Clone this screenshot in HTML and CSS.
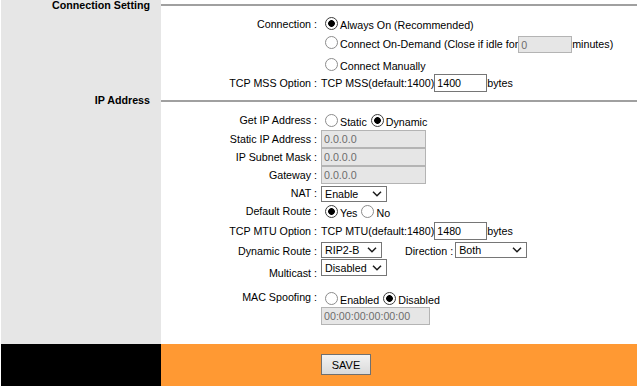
FILE: index.html
```html
<!DOCTYPE html>
<html>
<head>
<meta charset="utf-8">
<link rel="stylesheet" href="styles.css">
</head>
<body>
<div class="main">
  <div class="head h-a"><div class="htitle">Connection Setting</div><div class="hline"></div></div>

  <div class="row r-conn">
    <div class="lbl">Connection :</div>
    <div class="val">
      <div class="rl l1"><input type="radio" class="r" name="c" checked><span class="t">Always On (Recommended)</span></div>
      <div class="rl l2"><input type="radio" class="r" name="c"><span class="t">Connect On-Demand (Close if idle for</span><input class="tx dis w-idle" value="0" disabled><span class="t">minutes)</span></div>
      <div class="rl l3"><input type="radio" class="r" name="c"><span class="t">Connect Manually</span></div>
    </div>
  </div>

  <div class="row r-mss">
    <div class="lbl">TCP MSS Option :</div>
    <div class="val fc"><span class="t">TCP MSS(default:1400)</span><input class="tx w-num" value="1400"><span class="t">bytes</span></div>
  </div>

  <div class="head h-b"><div class="htitle">IP Address</div><div class="hline"></div></div>

  <div class="row r-getip">
    <div class="lbl">Get IP Address :</div>
    <div class="val">
      <div class="rl"><input type="radio" class="r" name="g"><span class="t">Static</span><input type="radio" class="r" name="g" checked><span class="t">Dynamic</span></div>
    </div>
  </div>

  <div class="row r-ip">
    <div class="lbl">Static IP Address :</div>
    <div class="val"><input class="tx dis w-ip" value="0.0.0.0" disabled></div>
  </div>
  <div class="row r-ip">
    <div class="lbl">IP Subnet Mask :</div>
    <div class="val"><input class="tx dis w-ip" value="0.0.0.0" disabled></div>
  </div>
  <div class="row r-ip">
    <div class="lbl">Gateway :</div>
    <div class="val"><input class="tx dis w-ip" value="0.0.0.0" disabled></div>
  </div>

  <div class="row r-nat">
    <div class="lbl">NAT :</div>
    <div class="val">
      <span class="sel w-nat"><select><option>Enable</option><option>Disable</option></select><svg class="chev" width="10" height="6" viewBox="0 0 10 6"><path d="M1 0.8 L5 4.8 L9 0.8" fill="none" stroke="#1a1a1a" stroke-width="1.5"/></svg></span>
    </div>
  </div>

  <div class="row r-def">
    <div class="lbl">Default Route :</div>
    <div class="val">
      <div class="rl"><input type="radio" class="r" name="d" checked><span class="t">Yes</span><input type="radio" class="r" name="d"><span class="t">No</span></div>
    </div>
  </div>

  <div class="row r-mtu">
    <div class="lbl">TCP MTU Option :</div>
    <div class="val fc"><span class="t">TCP MTU(default:1480)</span><input class="tx w-num" value="1480"><span class="t">bytes</span></div>
  </div>

  <div class="row r-dyn">
    <div class="lbl">Dynamic Route :</div>
    <div class="val fs">
      <span class="sel w-dyn"><select><option>RIP2-B</option><option>RIP1</option><option>Disable</option></select><svg class="chev" width="10" height="6" viewBox="0 0 10 6"><path d="M1 0.8 L5 4.8 L9 0.8" fill="none" stroke="#1a1a1a" stroke-width="1.5"/></svg></span>
      <span class="t dirlbl">Direction :</span>
      <span class="sel w-dir"><select><option>Both</option><option>In</option><option>Out</option></select><svg class="chev" width="10" height="6" viewBox="0 0 10 6"><path d="M1 0.8 L5 4.8 L9 0.8" fill="none" stroke="#1a1a1a" stroke-width="1.5"/></svg></span>
    </div>
  </div>

  <div class="row r-mc">
    <div class="lbl">Multicast :</div>
    <div class="val">
      <span class="sel w-mc"><select><option>Disabled</option><option>Enabled</option></select><svg class="chev" width="10" height="6" viewBox="0 0 10 6"><path d="M1 0.8 L5 4.8 L9 0.8" fill="none" stroke="#1a1a1a" stroke-width="1.5"/></svg></span>
    </div>
  </div>

  <div class="row r-mac">
    <div class="lbl">MAC Spoofing :</div>
    <div class="val">
      <div class="rl"><input type="radio" class="r" name="m"><span class="t">Enabled</span><input type="radio" class="r" name="m" checked><span class="t">Disabled</span></div>
      <input class="tx dis w-mac" value="00:00:00:00:00:00" disabled>
    </div>
  </div>

  <div class="filler"></div>
</div>

<div class="footer">
  <div class="f-side"></div>
  <div class="f-main"><button class="btn" type="button">SAVE</button></div>
</div>
</body>
</html>
```

FILE: styles.css
```css
html, body {
  margin: 0;
  padding: 0;
  background: #fff;
}
body {
  padding-left: 1px;
  font-family: "Liberation Sans", Arial, sans-serif;
  font-size: 10.7px;
  color: #000;
}
.main {
  background: linear-gradient(90deg, #e6e6e6 0, #e6e6e6 160px, #fff 160px);
}

/* section headings */
.head {
  display: grid;
  grid-template-columns: 160px 1fr;
  align-items: start;
  height: 11px;
}
.htitle {
  font-weight: bold;
  line-height: 11px;
  text-align: right;
  padding-right: 11px;
  white-space: nowrap;
}
.hline {
  height: 2px;
  background: #a0a0a0;
  margin-top: 4px;
}
.h-b { margin-top: 3px; }
.h-b .hline { margin-top: 5px; }

/* form rows */
.row {
  display: grid;
  grid-template-columns: 160px 159px 1fr;
  align-items: start;
}
.lbl {
  grid-column: 2;
  text-align: right;
  padding-right: 3px;
  line-height: 13px;
  white-space: nowrap;
}
.val {
  grid-column: 3;
  padding-left: 1px;
  white-space: nowrap;
}
.t { line-height: 13px; white-space: pre; }

.fc { display: flex; align-items: center; height: 100%; }
.fs { display: flex; align-items: flex-start; }

/* radio lines */
.rl {
  display: flex;
  align-items: flex-start;
}
.rl .t { margin-top: 2px; }
.r {
  appearance: none;
  -webkit-appearance: none;
  box-sizing: border-box;
  width: 13px;
  height: 13px;
  margin: 0 2px 0 4px;
  border: 1px solid #8c8c8c;
  border-radius: 50%;
  background: #fff;
  flex: none;
}
.r:checked {
  border-color: #3c3c3c;
  background: radial-gradient(circle, #000 0, #000 3px, #fff 3.7px);
}

/* text inputs */
.tx {
  box-sizing: border-box;
  height: 18px;
  border: 1px solid #767676;
  border-radius: 0;
  padding: 0 2px;
  margin: 0;
  font-family: "Liberation Sans", Arial, sans-serif;
  font-size: 10.7px;
  color: #000;
  background: #fff;
  outline: none;
}
.dis {
  background: #e6e6e6;
  border-color: #b4b4b4;
  color: #6d6d6d;
}
.w-idle { width: 54px; height: 17px; }
.w-num { width: 53px; }
.w-ip { width: 105px; display: block; }
.w-mac { width: 109px; display: block; }

/* selects */
.sel {
  position: relative;
  display: inline-block;
  flex: none;
}
.sel select {
  appearance: none;
  -webkit-appearance: none;
  box-sizing: border-box;
  width: 100%;
  height: 100%;
  margin: 0;
  border: 1px solid #767676;
  border-radius: 0;
  background: #fff;
  padding: 0 0 0 3px;
  font-family: "Liberation Sans", Arial, sans-serif;
  font-size: 10.7px;
  color: #000;
  display: block;
}
.chev {
  position: absolute;
  right: 5px;
  top: 50%;
  margin-top: -3px;
  pointer-events: none;
}
.w-nat { width: 66px; height: 16px; }
.w-dyn { width: 61px; height: 16px; }
.w-dir { width: 72px; height: 16px; margin-left: 2px; }
.w-mc { width: 66px; height: 17px; }
.dirlbl { margin: 3px 0 0 23px; }

/* per-row geometry */
.r-conn { height: 63px; }
.r-conn .lbl { padding-top: 7px; }
.r-conn .val { padding-top: 6px; }
.l1 { height: 19px; }
.l2 { height: 22px; }
.l3 { height: 16px; }

.r-mss { height: 18px; }
.r-mss .lbl { padding-top: 3px; }

.r-getip { height: 24px; }
.r-getip .lbl { padding-top: 8px; }
.r-getip .val { padding-top: 8px; }

.r-ip { height: 18px; }
.r-ip .lbl { padding-top: 3px; }

.r-nat { height: 20px; }
.r-nat .lbl { padding-top: 3px; }
.r-nat .val { padding-top: 2px; }

.r-def { height: 17px; }
.r-def .lbl { padding-top: 1px; }
.r-def .val { padding-top: 1px; }

.r-mtu { height: 20px; }
.r-mtu .lbl { padding-top: 4px; }

.r-dyn { height: 18px; }
.r-dyn .lbl { padding-top: 4px; }
.r-dyn .val { padding-top: 1px; }

.r-mc { height: 24px; }
.r-mc .lbl { padding-top: 8px; }

.r-mac { height: 42px; }
.r-mac .lbl { padding-top: 8px; }
.r-mac .val { padding-top: 9px; }
.r-mac .rl { height: 15px; }

.filler { height: 19px; }

/* footer */
.footer {
  display: grid;
  grid-template-columns: 160px 1fr;
  height: 42px;
}
.f-side { background: #000; }
.f-main {
  background: #ff9933;
  padding: 10px 0 0 160px;
}
.btn {
  box-sizing: border-box;
  width: 50px;
  height: 21px;
  margin: 0;
  padding: 0;
  border: 1px solid #707070;
  border-radius: 0;
  background: linear-gradient(#f2f2f2, #e6e6e6 50%, #dadada);
  font-family: "Liberation Sans", Arial, sans-serif;
  font-size: 11px;
  color: #000;
}
```
